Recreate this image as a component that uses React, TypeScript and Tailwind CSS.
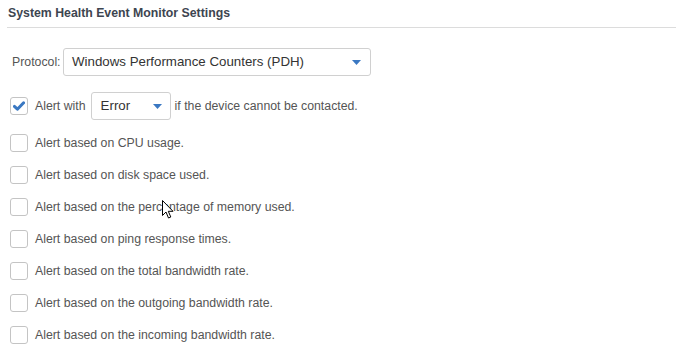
import React from 'react';

const rows = [
  'Alert based on CPU usage.',
  'Alert based on disk space used.',
  'Alert based on the percentage of memory used.',
  'Alert based on ping response times.',
  'Alert based on the total bandwidth rate.',
  'Alert based on the outgoing bandwidth rate.',
  'Alert based on the incoming bandwidth rate.',
];

function Caret() {
  return (
    <svg width="9" height="5" viewBox="0 0 9 5">
      <path d="M0 0 L9 0 L4.5 5 Z" fill="#3a78c2" />
    </svg>
  );
}

function Box({ checked }: { checked?: boolean }) {
  return (
    <div className="flex h-[18px] w-[18px] shrink-0 items-center justify-center rounded-[3px] border border-[#c4c4c4] bg-white">
      {checked && (
        <svg width="12" height="10" viewBox="0 0 12 10">
          <path d="M1.4 5.4 L4.4 8.2 L10.6 1.8" stroke="#3a78c2" strokeWidth="3" fill="none" strokeLinecap="round" strokeLinejoin="round" />
        </svg>
      )}
    </div>
  );
}

export default function App() {
  return (
    <div className="relative h-[349px] w-[676px] bg-white font-['Liberation_Sans',Arial,sans-serif] text-[12.3px] text-[#555]">
      <div className="ml-[7px] flex h-[28px] items-center border-b border-[#dcdcdc] pl-[1px] pb-[1px]">
        <span className="text-[12.3px] font-bold text-[#3d4550]">System Health Event Monitor Settings</span>
      </div>

      <div className="mt-[20px] flex items-center pl-[12px]">
        <span className="w-[51px]">Protocol:</span>
        <div className="flex h-[28px] w-[308px] items-center justify-between rounded-[3px] border border-[#d0d0d0] pl-[8px] pr-[9px] text-[13.3px] text-[#333]">
          <span>Windows Performance Counters (PDH)</span>
          <Caret />
        </div>
      </div>

      <div className="mt-[16px] flex items-center pl-[10px]">
        <Box checked />
        <span className="ml-[7px]">Alert with</span>
        <div className="ml-[5px] flex h-[28px] w-[80px] items-center justify-between rounded-[3px] border border-[#d0d0d0] pl-[9px] pr-[8px] text-[13.3px] text-[#333]">
          <span>Error</span>
          <Caret />
        </div>
        <span className="ml-[4px]">if the device cannot be contacted.</span>
      </div>

      <div className="mt-[7px] flex flex-col">
        {rows.map((r) => (
          <div key={r} className="flex h-[32px] items-center pl-[10px]">
            <Box />
            <span className="ml-[7px]">{r}</span>
          </div>
        ))}
      </div>

      <svg className="absolute left-[162px] top-[200px]" width="12" height="19" viewBox="0 0 12 19">
        <path d="M0.5 0.5 L0.5 15.5 L4 12 L6.5 18 L8.8 17 L6.3 11.3 L11 11.3 Z" fill="white" stroke="black" strokeWidth="1" strokeLinejoin="round" />
      </svg>
    </div>
  );
}
